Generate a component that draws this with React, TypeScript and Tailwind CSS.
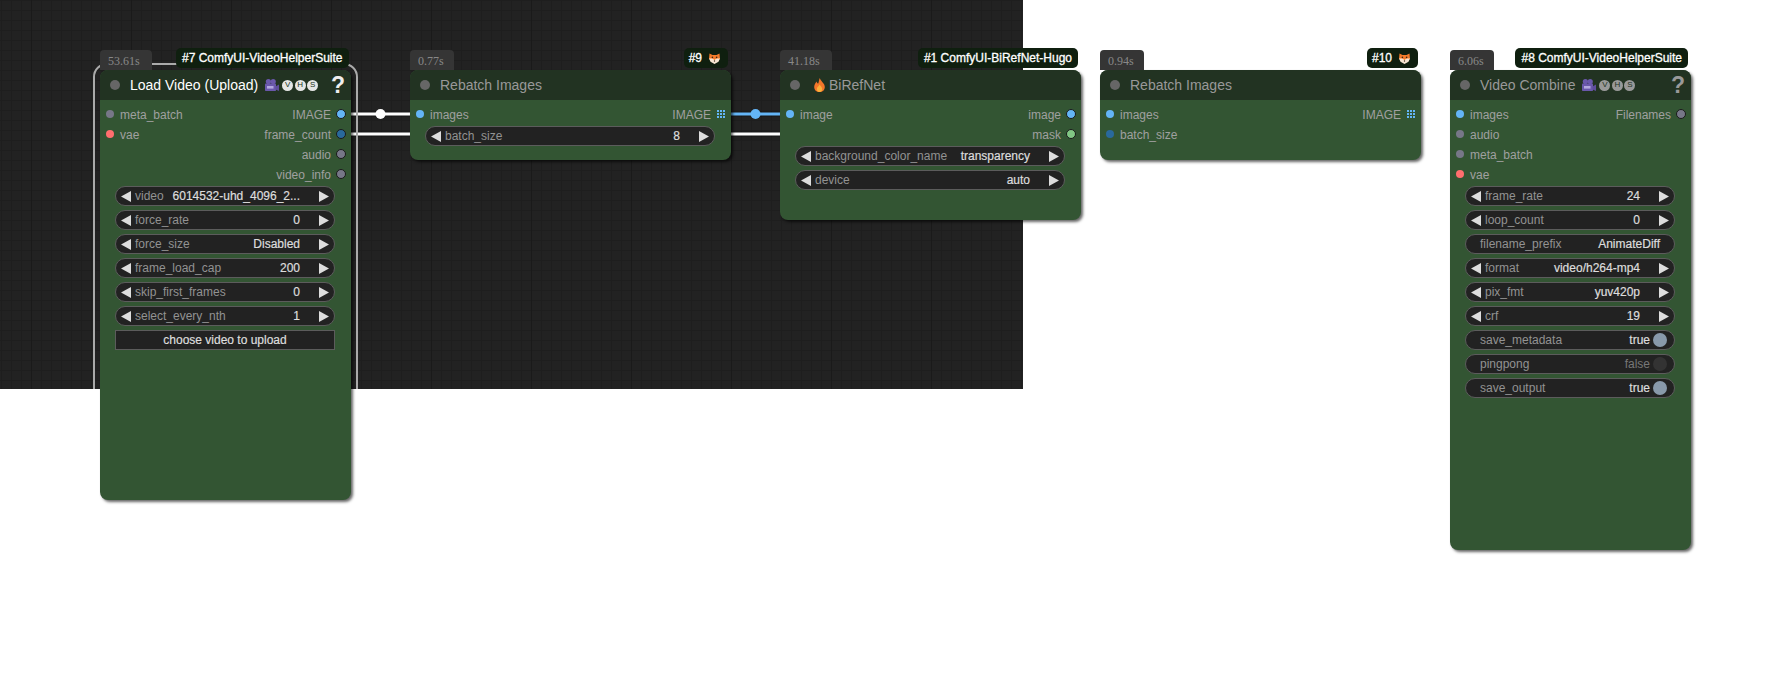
import type { ReactNode } from 'react';

type Slot = { label: string; color: string };
type Widget =
  | { kind: 'combo'; label: string; value: string }
  | { kind: 'text'; label: string; value: string }
  | { kind: 'toggle'; label: string; on: boolean }
  | { kind: 'button'; label: string };

function Arrow({ dir }: { dir: 'l' | 'r' }) {
  return (
    <svg width="10" height="11" viewBox="0 0 10 11" className="shrink-0">
      <polygon points={dir === 'l' ? '0,5.5 10,0 10,11' : '10,5.5 0,0 0,11'} fill="#dddddd" />
    </svg>
  );
}

function WidgetRow({ w }: { w: Widget }) {
  if (w.kind === 'button') {
    return (
      <div className="h-5 ml-[15px] mr-[16px] border border-[#5c5c5c] bg-[#222] flex items-center justify-center text-[#ddd] text-xs [-webkit-text-stroke:0.2px_#ddd]">
        {w.label}
      </div>
    );
  }
  const box = 'h-5 ml-[15px] mr-[16px] rounded-full border border-[#5c5c5c] bg-[#222] flex items-center text-xs whitespace-nowrap';
  const value = 'text-[#ddd] [-webkit-text-stroke:0.2px_#ddd]';
  if (w.kind === 'combo') {
    return (
      <div className={`${box} px-[5px]`}>
        <Arrow dir="l" />
        <span className="ml-1 flex-1 text-[#929292]">{w.label}</span>
        <span className={`mr-[19px] ${value}`}>{w.value}</span>
        <Arrow dir="r" />
      </div>
    );
  }
  if (w.kind === 'text') {
    return (
      <div className={`${box} pl-[14px] pr-[14px]`}>
        <span className="flex-1 text-[#929292]">{w.label}</span>
        <span className={value}>{w.value}</span>
      </div>
    );
  }
  return (
    <div className={`${box} pl-[14px] pr-[7px]`}>
      <span className="flex-1 text-[#929292]">{w.label}</span>
      <span className={w.on ? value : 'text-[#777]'}>{w.on ? 'true' : 'false'}</span>
      <span className={`ml-[3px] w-[14px] h-[14px] rounded-full ${w.on ? 'bg-[#8899aa]' : 'bg-[#333]'}`} />
    </div>
  );
}

function SlotRow({ input, output, grid }: { input?: Slot; output?: Slot; grid?: boolean }) {
  return (
    <div className="h-5 flex items-center justify-between text-xs text-[#a0a0a0] whitespace-nowrap">
      {input ? (
        <div className="flex items-center pl-1.5">
          <span className="w-2 h-2 rounded-full" style={{ background: input.color }} />
          <span className="ml-1.5 pt-0.5">{input.label}</span>
        </div>
      ) : (
        <span />
      )}
      {output &&
        (grid ? (
          <div className="flex items-center pr-1.5">
            <span className="pt-0.5">{output.label}</span>
            <span className="ml-1.5 grid grid-cols-3 gap-px">
              {Array.from({ length: 9 }).map((_, i) => (
                <span key={i} className="w-0.5 h-0.5 bg-[#64b5f6]" />
              ))}
            </span>
          </div>
        ) : (
          <div className="flex items-center pr-[5px]">
            <span className="pt-0.5">{output.label}</span>
            <span
              className="ml-[5px] w-[10px] h-[10px] rounded-full border border-[#1a1a1a]"
              style={{ background: output.color }}
            />
          </div>
        ))}
    </div>
  );
}

function Fox() {
  return (
    <svg width="11" height="11" viewBox="0 0 11 11" className="shrink-0 mr-[3px]">
      <polygon points="0.5,0.5 3.5,2 7.5,2 10.5,0.5 11,6 5.5,8 0,6" fill="#f47b2a" />
      <path d="M0 5.6 L3.5 5.6 L5.5 7 L7.5 5.6 L11 5.6 L9.5 8.8 L5.5 11 L1.5 8.8 Z" fill="#f8e6d2" />
      <circle cx="3.4" cy="4.4" r="0.8" fill="#3a2414" />
      <circle cx="7.6" cy="4.4" r="0.8" fill="#3a2414" />
      <circle cx="5.5" cy="8" r="0.7" fill="#3a2414" />
    </svg>
  );
}

function Flame() {
  return (
    <svg width="11" height="14" viewBox="0 0 11 14" className="shrink-0">
      <path d="M5.8 0 C6.2 3 10.8 5 10.8 9 C10.8 12 8.5 14 5.5 14 C2.5 14 0.2 12 0.2 9 C0.2 6.5 1.8 5 2.6 3.6 C3 5 3.6 5.6 4.2 5.6 C5 4 4.8 2 5.8 0 Z" fill="#f4762a" />
      <path d="M5.6 6.5 C6.2 8 8.2 9 8.2 11 C8.2 12.8 7 14 5.5 14 C4 14 2.8 12.8 2.8 11 C2.8 9.2 4.8 8.4 5.6 6.5 Z" fill="#fbb03b" />
    </svg>
  );
}

function Camera() {
  return (
    <svg width="14" height="12" viewBox="0 0 14 12" className="shrink-0">
      <circle cx="3.4" cy="2.6" r="2.6" fill="#6a58ab" />
      <circle cx="8.2" cy="2.6" r="2.6" fill="#6a58ab" />
      <rect x="0" y="4.4" width="11" height="7.6" rx="0.8" fill="#6a58ab" />
      <polygon points="10.5,7.5 14,5.4 14,12 10.5,10.4" fill="#5f4e9c" />
      <rect x="2" y="7" width="6.5" height="2.6" fill="#b3a8e0" />
    </svg>
  );
}

function Vhs({ light }: { light: boolean }) {
  return (
    <span className="flex gap-[1.5px] ml-[3px]">
      {['V', 'H', 'S'].map((l) => (
        <span
          key={l}
          className={`w-[11px] h-[11px] rounded-full flex items-center justify-center text-[8px] leading-none text-[#223322] ${light ? 'bg-[#e6e6e6]' : 'bg-[#999]'}`}
        >
          {l}
        </span>
      ))}
    </span>
  );
}

function GraphNode({
  className,
  time,
  timeWidth,
  badge,
  badgePos,
  title,
  selected,
  icon,
  extra,
  children,
}: {
  className: string;
  time: string;
  timeWidth: string;
  badge: ReactNode;
  badgePos: string;
  title: string;
  selected?: boolean;
  icon?: ReactNode;
  extra?: ReactNode;
  children: ReactNode;
}) {
  return (
    <div className={`absolute ${className} rounded-lg bg-[#335533] shadow-[2px_2px_3px_rgba(0,0,0,0.6)]`}>
      <div className={`absolute left-0 -top-5 h-5 pl-2 pt-[3px] rounded-t bg-[#353535] text-[#888] text-xs leading-[16px] font-['Liberation_Serif',serif] ${timeWidth}`}>
        {time}
      </div>
      <div className={`absolute -top-[22px] h-5 rounded-[5px] bg-[#0f1f0f] text-white text-xs [-webkit-text-stroke:0.3px_#fff] flex items-center gap-[7px] whitespace-nowrap ${badgePos}`}>
        {badge}
      </div>
      <div className="h-[30px] rounded-t-lg bg-[#223322] flex items-center pl-[10px] relative">
        <span className="w-2.5 h-2.5 rounded-full bg-[#666]" />
        {icon && <span className="ml-[14px] mr-1">{icon}</span>}
        <span className={`text-sm whitespace-nowrap ${icon ? '' : 'ml-[10px]'} ${selected ? 'text-white' : 'text-[#999]'}`}>{title}</span>
        {extra}
      </div>
      <div className="pt-1 flex flex-col">{children}</div>
    </div>
  );
}

const GREY = '#777788';
const RED = '#ff6e6e';
const BLUE = '#64b5f6';
const INT = '#29699c';
const GREEN = '#81c784';

const loadWidgets: Widget[] = [
  { kind: 'combo', label: 'video', value: '6014532-uhd_4096_2...' },
  { kind: 'combo', label: 'force_rate', value: '0' },
  { kind: 'combo', label: 'force_size', value: 'Disabled' },
  { kind: 'combo', label: 'frame_load_cap', value: '200' },
  { kind: 'combo', label: 'skip_first_frames', value: '0' },
  { kind: 'combo', label: 'select_every_nth', value: '1' },
  { kind: 'button', label: 'choose video to upload' },
];

const combineWidgets: Widget[] = [
  { kind: 'combo', label: 'frame_rate', value: '24' },
  { kind: 'combo', label: 'loop_count', value: '0' },
  { kind: 'text', label: 'filename_prefix', value: 'AnimateDiff' },
  { kind: 'combo', label: 'format', value: 'video/h264-mp4' },
  { kind: 'combo', label: 'pix_fmt', value: 'yuv420p' },
  { kind: 'combo', label: 'crf', value: '19' },
  { kind: 'toggle', label: 'save_metadata', on: true },
  { kind: 'toggle', label: 'pingpong', on: false },
  { kind: 'toggle', label: 'save_output', on: true },
];

function Widgets({ items }: { items: Widget[] }) {
  return (
    <div className="mt-0.5 flex flex-col gap-1">
      {items.map((w) => (
        <WidgetRow key={w.label} w={w} />
      ))}
    </div>
  );
}

export default function App() {
  return (
    <div className="relative w-[1791px] h-[680px] bg-white overflow-hidden font-['Liberation_Sans',Arial,sans-serif]">
      {/* graph canvas, everything in here is clipped at its edge */}
      <div className="relative w-[1023px] h-[389px] overflow-hidden bg-[#222] bg-[linear-gradient(to_right,#1a1a1a_1px,transparent_1px),linear-gradient(to_right,#1e1e1e_1px,transparent_1px),linear-gradient(to_bottom,#1e1e1e_1px,transparent_1px)] bg-[size:100px_100px,10px_10px,10px_10px] bg-[position:31px_0,1px_0,0_0]">
        <svg width="1023" height="389" className="absolute inset-0">
          <g fill="none">
            <path d="M351 114H410M351 134H410M731 134H780" stroke="#000" strokeOpacity="0.35" strokeWidth="5" />
            <path d="M731 114H780" stroke="#000" strokeOpacity="0.35" strokeWidth="5" />
            <path d="M351 114H410M351 134H410M731 134H780" stroke="#fff" strokeWidth="3" />
            <path d="M731 114H780" stroke="#64b5f6" strokeWidth="3" />
          </g>
          <circle cx="380.5" cy="114" r="5" fill="#fff" />
          <circle cx="755.5" cy="114" r="5" fill="#64b5f6" />
        </svg>
        {/* selection outline of the Load Video node */}
        <div className="absolute left-[93px] top-[63px] w-[265px] h-[444px] rounded-[14px] border-2 border-[#aaa]" />
      </div>

      <GraphNode
        className="left-[100px] top-[70px] w-[251px] h-[430px]"
        time="53.61s"
        timeWidth="w-[52px]"
        badge={<span className="px-1.5">#7 ComfyUI-VideoHelperSuite</span>}
        badgePos="left-[76px]"
        title="Load Video (Upload)"
        selected
        extra={
          <>
            <span className="ml-[7px]"><Camera /></span>
            <Vhs light />
            <span className="absolute right-[6px] top-[4px] text-[#eee] text-[23px] leading-[23px] font-bold">?</span>
          </>
        }
      >
        <SlotRow input={{ label: 'meta_batch', color: GREY }} output={{ label: 'IMAGE', color: BLUE }} />
        <SlotRow input={{ label: 'vae', color: RED }} output={{ label: 'frame_count', color: INT }} />
        <SlotRow output={{ label: 'audio', color: GREY }} />
        <SlotRow output={{ label: 'video_info', color: GREY }} />
        <Widgets items={loadWidgets} />
      </GraphNode>

      <GraphNode
        className="left-[410px] top-[70px] w-[321px] h-[90px]"
        time="0.77s"
        timeWidth="w-[44px]"
        badge={<><span className="pl-[5px]">#9</span><Fox /></>}
        badgePos="right-[3px] pr-[5px]"
        title="Rebatch Images"
      >
        <SlotRow input={{ label: 'images', color: BLUE }} output={{ label: 'IMAGE', color: BLUE }} grid />
        <Widgets items={[{ kind: 'combo', label: 'batch_size', value: '8' }]} />
      </GraphNode>

      <GraphNode
        className="left-[780px] top-[70px] w-[301px] h-[150px]"
        time="41.18s"
        timeWidth="w-[52px]"
        badge={<span className="px-1.5">#1 ComfyUI-BiRefNet-Hugo</span>}
        badgePos="right-[3px]"
        title="BiRefNet"
        icon={<Flame />}
      >
        <SlotRow input={{ label: 'image', color: BLUE }} output={{ label: 'image', color: BLUE }} />
        <SlotRow output={{ label: 'mask', color: GREEN }} />
        <Widgets
          items={[
            { kind: 'combo', label: 'background_color_name', value: 'transparency' },
            { kind: 'combo', label: 'device', value: 'auto' },
          ]}
        />
      </GraphNode>

      <GraphNode
        className="left-[1100px] top-[70px] w-[321px] h-[90px]"
        time="0.94s"
        timeWidth="w-[44px]"
        badge={<><span className="pl-[5px]">#10</span><Fox /></>}
        badgePos="right-[3px] pr-[5px]"
        title="Rebatch Images"
      >
        <SlotRow input={{ label: 'images', color: BLUE }} output={{ label: 'IMAGE', color: BLUE }} grid />
        <SlotRow input={{ label: 'batch_size', color: INT }} />
      </GraphNode>

      <GraphNode
        className="left-[1450px] top-[70px] w-[241px] h-[480px]"
        time="6.06s"
        timeWidth="w-[44px]"
        badge={<span className="px-1.5">#8 ComfyUI-VideoHelperSuite</span>}
        badgePos="right-[3px]"
        title="Video Combine"
        extra={
          <>
            <span className="ml-[7px]"><Camera /></span>
            <Vhs light={false} />
            <span className="absolute right-[6px] top-[4px] text-[#999] text-[23px] leading-[23px] font-bold">?</span>
          </>
        }
      >
        <SlotRow input={{ label: 'images', color: BLUE }} output={{ label: 'Filenames', color: GREY }} />
        <SlotRow input={{ label: 'audio', color: GREY }} />
        <SlotRow input={{ label: 'meta_batch', color: GREY }} />
        <SlotRow input={{ label: 'vae', color: RED }} />
        <Widgets items={combineWidgets} />
      </GraphNode>
    </div>
  );
}
